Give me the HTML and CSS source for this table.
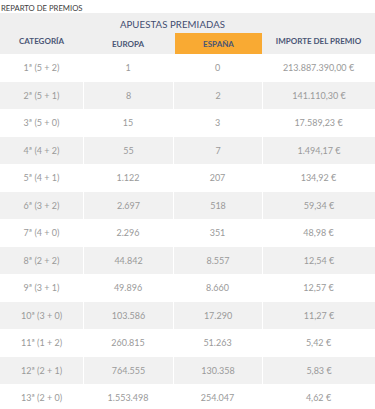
FILE: index.html
```html
<!DOCTYPE html>
<html lang="es">
<head>
    <meta charset="UTF-8">
    <meta name="viewport" content="width=device-width, initial-scale=1.0">
    <title>Reparto de premios</title>
    <link rel="stylesheet" href="styles.css">
</head>
<body>
    <main class="reparto">
        <h2 class="titulo">REPARTO DE PREMIOS</h2>

        <div class="tabla">
            <div class="cab">
                <div class="cab-apuestas">APUESTAS PREMIADAS</div>
                <div class="cab-cat">CATEGORÍA</div>
                <div class="cab-europa">EUROPA</div>
                <div class="cab-espana"><span>ESPAÑA</span></div>
                <div class="cab-importe">IMPORTE DEL PREMIO</div>
            </div>

            <div class="fila"><span>1ª (5 + 2)</span><span>1</span><span>0</span><span>213.887.390,00 €</span></div>
            <div class="fila"><span>2ª (5 + 1)</span><span>8</span><span>2</span><span>141.110,30 €</span></div>
            <div class="fila"><span>3ª (5 + 0)</span><span>15</span><span>3</span><span>17.589,23 €</span></div>
            <div class="fila"><span>4ª (4 + 2)</span><span>55</span><span>7</span><span>1.494,17 €</span></div>
            <div class="fila"><span>5ª (4 + 1)</span><span>1.122</span><span>207</span><span>134,92 €</span></div>
            <div class="fila"><span>6ª (3 + 2)</span><span>2.697</span><span>518</span><span>59,34 €</span></div>
            <div class="fila"><span>7ª (4 + 0)</span><span>2.296</span><span>351</span><span>48,98 €</span></div>
            <div class="fila"><span>8ª (2 + 2)</span><span>44.842</span><span>8.557</span><span>12,54 €</span></div>
            <div class="fila"><span>9ª (3 + 1)</span><span>49.896</span><span>8.660</span><span>12,57 €</span></div>
            <div class="fila"><span>10ª (3 + 0)</span><span>103.586</span><span>17.290</span><span>11,27 €</span></div>
            <div class="fila"><span>11ª (1 + 2)</span><span>260.815</span><span>51.263</span><span>5,42 €</span></div>
            <div class="fila"><span>12ª (2 + 1)</span><span>764.555</span><span>130.358</span><span>5,83 €</span></div>
            <div class="fila"><span>13ª (2 + 0)</span><span>1.553.498</span><span>254.047</span><span>4,62 €</span></div>
        </div>
    </main>
</body>
</html>
```

FILE: styles.css
```css
body {
    margin: 0;
    font-family: Lato, "Open Sans", sans-serif;
    background: #fff;
}

.reparto {
    width: 375px;
}

.titulo {
    margin: 0;
    padding: 3px 0 0 1px;
    height: 10px;
    font-size: 7.7px;
    font-weight: 400;
    line-height: 10px;
    color: #3d3d3d;
}

.cab {
    display: grid;
    grid-template-columns: 83px 90px 89px 113px;
    grid-template-rows: 20px 20px;
    padding-bottom: 1px;
    background: #efefef;
    color: #4a5675;
    font-size: 8px;
    font-weight: 700;
    text-align: center;
}

.cab-apuestas {
    grid-column: 2 / 4;
    grid-row: 1;
    padding-top: 5px;
    font-size: 9.6px;
    font-weight: 400;
    line-height: 13px;
    color: #3f4c70;
    letter-spacing: 0.1px;
}

.cab-cat,
.cab-importe {
    grid-row: 2;
    padding-top: 3px;
}

.cab-cat {
    grid-column: 1;
}

.cab-europa {
    grid-column: 2;
    grid-row: 2;
    padding-top: 6px;
}

.cab-importe {
    grid-column: 4;
}

.cab-espana {
    grid-column: 3;
    grid-row: 2;
    padding-left: 2px;
}

.cab-espana span {
    display: block;
    height: 20px;
    line-height: 20px;
    padding-top: 1px;
    background: #f9aa33;
}

.fila {
    display: grid;
    grid-template-columns: 83px 90px 89px 113px;
    height: 27.5px;
    font-size: 9px;
    font-weight: 400;
    color: #9a9a9a;
    text-align: center;
}

.fila span {
    display: block;
    height: 100%;
    line-height: 27.5px;
}

.fila:nth-child(odd) span {
    background: #f1f1f1;
    border-left: 1px solid #fff;
}

.fila:nth-child(odd) span:first-child {
    border-left: none;
}
```
